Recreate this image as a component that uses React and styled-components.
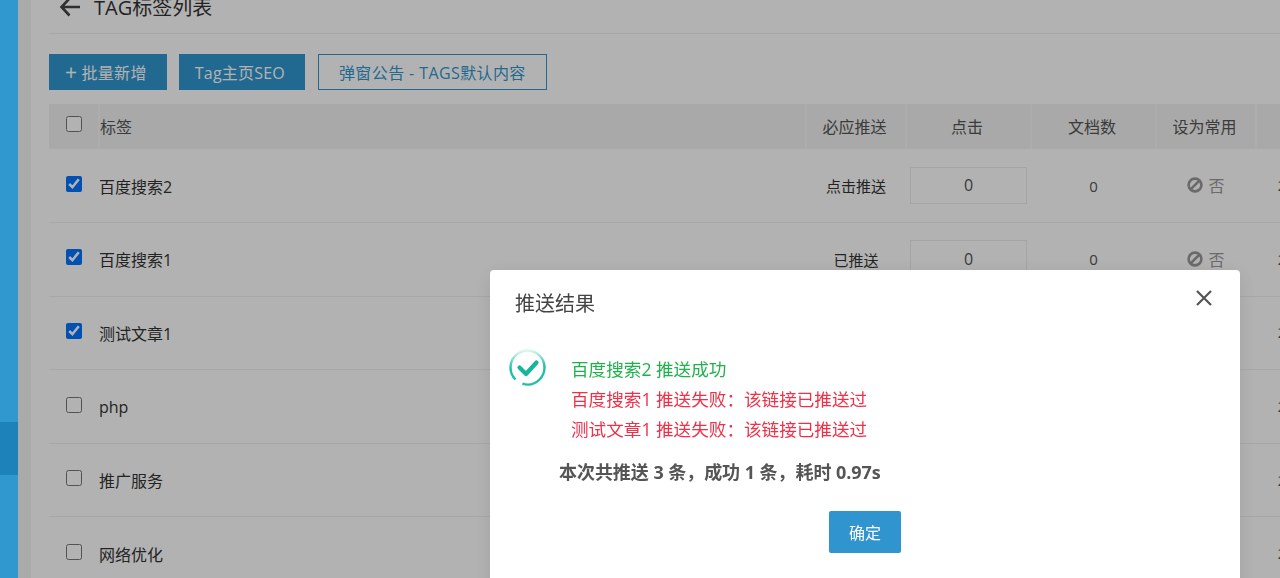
import React from 'react'
import styled, { createGlobalStyle } from 'styled-components'

const GlobalStyle = createGlobalStyle`
  html, body {
    margin: 0;
    height: 100%;
    overflow: hidden;
    background: #fff;
    font-family: "Open Sans", "Noto Sans CJK SC", sans-serif;
    color: #333;
  }
`

const Page = styled.div`
  display: flex;
  height: 578px;
  overflow: hidden;
`

const Sidebar = styled.div`
  position: relative;
  z-index: 20;
  flex: 0 0 18px;
  height: 578px;
  padding-top: 422px;
  box-sizing: border-box;
  background: #3097cf;
`

const SidebarActive = styled.div`
  height: 53px;
  background: #1d82ba;
`

const Gutter = styled.div`
  flex: 0 0 13px;
  background: #f4f4f4;
`

const Main = styled.div`
  flex: 1;
  min-width: 0;
  padding: 0 0 0 18px;
  margin-top: -19px;
  overflow: hidden;
`

const TitleBar = styled.div`
  display: flex;
  align-items: center;
  gap: 13px;
  box-sizing: border-box;
  height: 53px;
  padding: 0 0 1px 10px;
  border-bottom: 1px solid #eee;
  font-size: 20px;
  color: #333;
`

const Toolbar = styled.div`
  display: flex;
  gap: 12px;
  margin: 20px 0 14px;
`

const Button = styled.div`
  display: flex;
  align-items: center;
  box-sizing: border-box;
  height: 36px;
  padding: ${p => (p.$outline ? '0 20px' : '0 20px 0 16px')};
  margin-left: ${p => (p.$outline ? 1 : 0)}px;
  font-size: 16px;
  letter-spacing: ${p => p.$spacing || 0}px;
  white-space: nowrap;
  color: ${p => (p.$outline ? '#3097cf' : '#fff')};
  background: ${p => (p.$outline ? 'transparent' : '#3097cf')};
  border: ${p => (p.$outline ? '1px solid #3097cf' : 'none')};
`

const PlusSign = styled.span`
  margin-right: 4px;
  font-size: 21px;
  line-height: 1;
`

const Table = styled.table`
  table-layout: fixed;
  width: 1320px;
  border-collapse: collapse;
  font-size: 16px;
`

const HeadCell = styled.th`
  height: 43px;
  padding: 0 ${p => (p.$align ? 0 : 3)}px 2px 0;
  font-weight: 400;
  font-size: 16px;
  color: #555;
  background: #f2f2f2;
  border-right: 2px solid #f8f8f8;
  text-align: ${p => p.$align || 'center'};
`

const Row = styled.tr`
  height: 73.6px;
  border-bottom: 1px solid #f0f0f0;
`

const Cell = styled.td`
  padding: 0;
  text-align: ${p => p.$align || 'center'};
  font-size: ${p => p.$size || 16}px;
  color: ${p => p.$color || '#333'};
  white-space: nowrap;
  overflow: hidden;
`

const Check = styled.input.attrs({ type: 'checkbox', readOnly: true })`
  display: block;
  width: 16px;
  height: 16px;
  margin: ${p => (p.$head ? '-3px' : '-4px')} 0 0 17px;
`

const ClickInput = styled.input.attrs({ readOnly: true })`
  display: block;
  box-sizing: border-box;
  width: 117px;
  height: 37px;
  margin: -1px 0 0 4px;
  border: 1px solid #ececec;
  outline: none;
  background: transparent;
  text-align: center;
  font: 16px "Open Sans", sans-serif;
  color: #555;
`

const NoFlag = styled.span`
  display: inline-flex;
  align-items: center;
  gap: 5px;
  font-size: 16px;
  color: #999;
`

const Shade = styled.div`
  position: fixed;
  inset: 0;
  z-index: 10;
  padding: 270px 0 0 490px;
  background: rgba(0, 0, 0, 0.3);
`

const Dialog = styled.div`
  position: relative;
  box-sizing: border-box;
  width: 750px;
  height: 330px;
  background: #fff;
  border-radius: 4px;
  box-shadow: 0 4px 20px rgba(0, 0, 0, 0.1);
`

const DialogTitle = styled.div`
  padding: 20px 25px 0;
  height: 49px;
  line-height: 28px;
  box-sizing: border-box;
  font-size: 20px;
  color: #444;
`

const CloseIcon = styled.svg`
  position: absolute;
  top: 20px;
  right: 28px;
  display: block;
`

const DialogBody = styled.div`
  display: flex;
  padding: 30px 0 0 18px;
`

const ResultList = styled.div`
  padding: 5px 0 0 25px;
  font-size: 17.6px;
  line-height: 30px;
`

const ResultLine = styled.div`
  color: ${p => (p.$ok ? '#1fb14b' : '#ee3048')};
`

const Summary = styled.div`
  margin: 13px 0 0 69px;
  font-size: 18px;
  letter-spacing: -0.05px;
  line-height: 30px;
  font-weight: 700;
  color: #555;
`

const DialogFooter = styled.div`
  display: flex;
  justify-content: flex-end;
  padding: 24px 339px 0 0;
`

const OkButton = styled.div`
  display: flex;
  align-items: center;
  justify-content: center;
  width: 72px;
  height: 42px;
  border-radius: 2px;
  background: #3095ce;
  color: #fff;
  font-size: 16px;
`

const BackArrow = () => (
  <svg width="22" height="20" viewBox="0 0 22 20" fill="none" stroke="#444" strokeWidth="2.6">
    <path d="M21 10H2.5M10.5 1.5L2.5 10l8 8.5" />
  </svg>
)

const BanIcon = () => (
  <svg width="16" height="16" viewBox="0 0 16 16" fill="none" stroke="#999" strokeWidth="2.6">
    <circle cx="8" cy="8" r="6.4" />
    <path d="M12.4 3.6L3.6 12.4" />
  </svg>
)

const SuccessIcon = () => (
  <svg width="38" height="38" viewBox="0 0 38 38" fill="none">
    <defs>
      <linearGradient id="ring" x1="0.9" y1="0.1" x2="0.2" y2="0.9">
        <stop offset="0.55" stopColor="#1fc0a4" />
        <stop offset="1" stopColor="#1fc0a4" stopOpacity="0.15" />
      </linearGradient>
    </defs>
    <circle cx="19.5" cy="18.5" r="17" stroke="url(#ring)" strokeWidth="2.4" strokeDasharray="98 10.8" transform="rotate(135 19.5 18.5)" />
    <path d="M11.5 18.5l6.5 6.5L28.5 13.5" stroke="#15b79c" strokeWidth="4.2" strokeLinecap="round" strokeLinejoin="round" />
  </svg>
)

const rows = [
  { name: '百度搜索2', push: '点击推送', checked: true },
  { name: '百度搜索1', push: '已推送', checked: true },
  { name: '测试文章1', push: '已推送', checked: true },
  { name: 'php', push: '点击推送' },
  { name: '推广服务', push: '点击推送' },
  { name: '网络优化', push: '点击推送' }
]

export default function App () {
  return (
    <>
      <GlobalStyle />
      <Page>
        <Sidebar>
          <SidebarActive />
        </Sidebar>
        <Gutter />
        <Main>
          <TitleBar>
            <BackArrow />
            <span>TAG标签列表</span>
          </TitleBar>
          <Toolbar>
            <Button $spacing={0.36}><PlusSign>+</PlusSign>批量新增</Button>
            <Button $spacing={0.2}>Tag主页SEO</Button>
            <Button $outline $spacing={0.4}>弹窗公告 - TAGS默认内容</Button>
          </Toolbar>
          <Table>
            <colgroup>
              <col width="50" />
              <col width="707" />
              <col width="100" />
              <col width="125" />
              <col width="125" />
              <col width="100" />
              <col width="113" />
            </colgroup>
            <thead>
              <tr>
                <HeadCell $align='left'><Check $head /></HeadCell>
                <HeadCell $align='left'>标签</HeadCell>
                <HeadCell>必应推送</HeadCell>
                <HeadCell>点击</HeadCell>
                <HeadCell>文档数</HeadCell>
                <HeadCell>设为常用</HeadCell>
                <HeadCell>时间</HeadCell>
              </tr>
            </thead>
            <tbody>
              {rows.map(row => (
                <Row key={row.name}>
                  <Cell><Check defaultChecked={row.checked} /></Cell>
                  <Cell $align='left'>{row.name}</Cell>
                  <Cell $size={15}>{row.push}</Cell>
                  <Cell><ClickInput defaultValue='0' /></Cell>
                  <Cell $size={15} $color='#555'>0</Cell>
                  <Cell><NoFlag><BanIcon />否</NoFlag></Cell>
                  <Cell $size={14} $align='left' $color='#555'>&nbsp;&nbsp;&nbsp;&nbsp;&nbsp;&nbsp;2024-01-01</Cell>
                </Row>
              ))}
            </tbody>
          </Table>
        </Main>
      </Page>
      <Shade>
        <Dialog>
          <DialogTitle>推送结果</DialogTitle>
          <CloseIcon width="16" height="16" viewBox="0 0 16 16" fill="none" stroke="#555" strokeWidth="2.2">
            <path d="M1 1l14 14M15 1L1 15" />
          </CloseIcon>
          <DialogBody>
            <SuccessIcon />
            <ResultList>
              <ResultLine $ok>百度搜索2 推送成功</ResultLine>
              <ResultLine>百度搜索1 推送失败：该链接已推送过</ResultLine>
              <ResultLine>测试文章1 推送失败：该链接已推送过</ResultLine>
            </ResultList>
          </DialogBody>
          <Summary>本次共推送 3 条，成功 1 条，耗时 0.97s</Summary>
          <DialogFooter>
            <OkButton>确定</OkButton>
          </DialogFooter>
        </Dialog>
      </Shade>
    </>
  )
}
